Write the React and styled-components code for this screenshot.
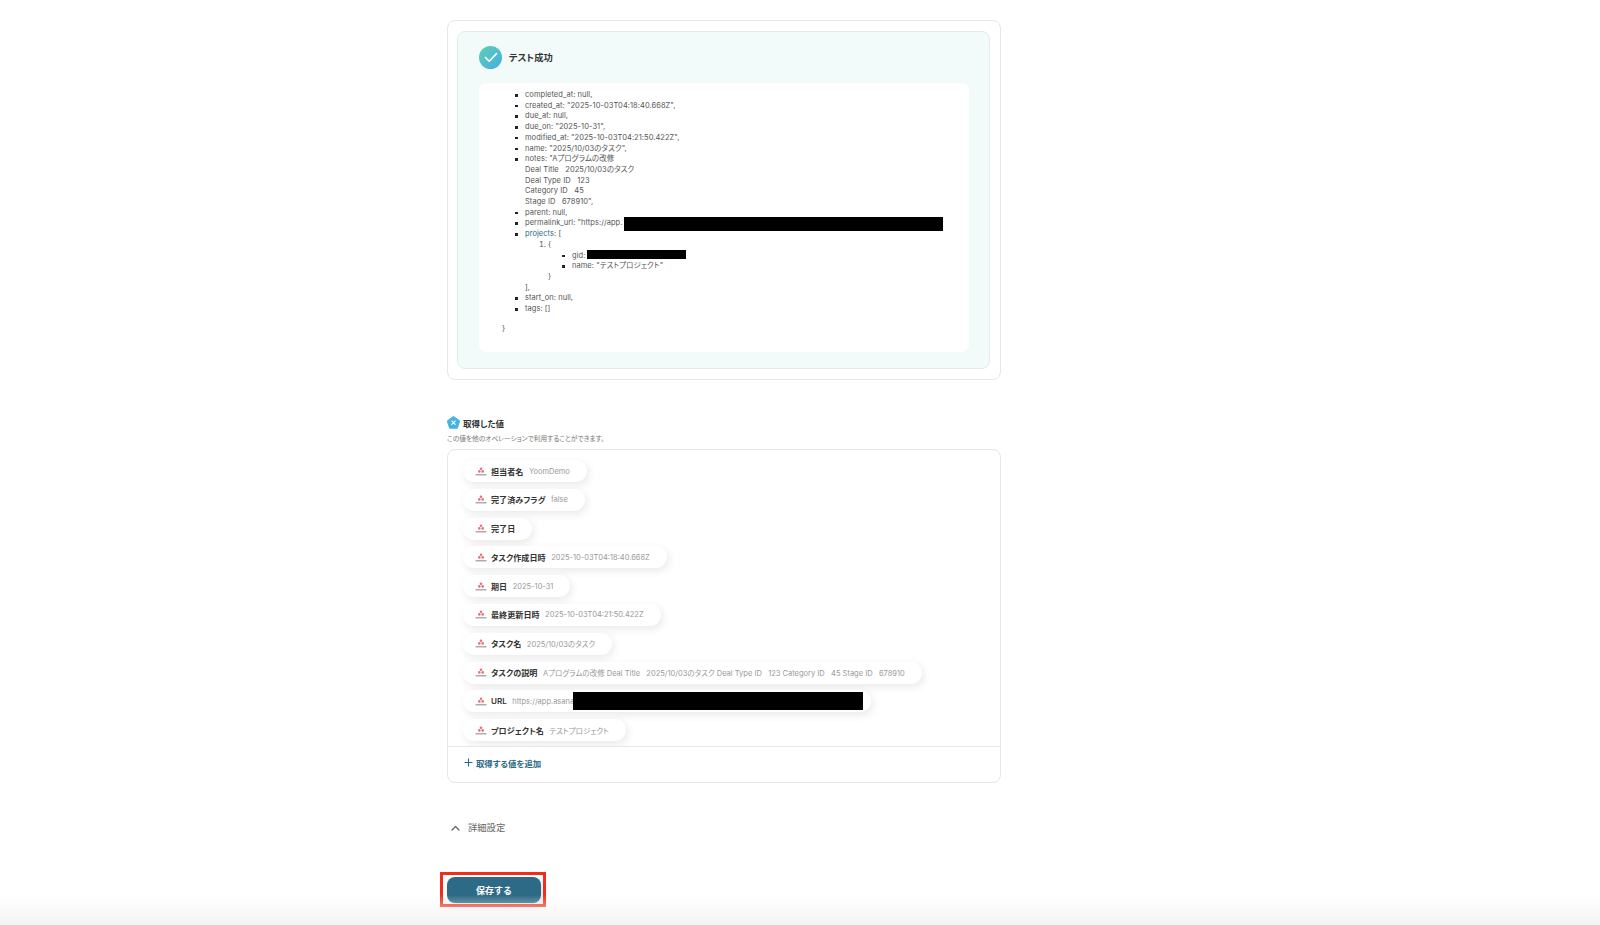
import React from "react";
import styled, { createGlobalStyle, css } from "styled-components";

const FONT = `Inter, "Noto Sans CJK JP", "Noto Sans", sans-serif`;

const outputs = [
  { label: "担当者名", value: "YoomDemo" },
  { label: "完了済みフラグ", value: "false" },
  { label: "完了日", value: "" },
  { label: "タスク作成日時", value: "2025-10-03T04:18:40.668Z" },
  { label: "期日", value: "2025-10-31" },
  { label: "最終更新日時", value: "2025-10-03T04:21:50.422Z" },
  { label: "タスク名", value: "2025/10/03のタスク" },
  {
    label: "タスクの説明",
    value:
      "Aプログラムの改修 Deal Title\u00a0\u00a0\u00a02025/10/03のタスク Deal Type ID\u00a0\u00a0\u00a0123 Category ID\u00a0\u00a0\u00a045 Stage ID\u00a0\u00a0\u00a0678910",
  },
  { label: "URL", value: "https://app.asana", hidden: 290 },
  { label: "プロジェクト名", value: "テストプロジェクト" },
];

function AppMark() {
  return (
    <svg width="12" height="9" viewBox="0 0 12 9">
      <circle cx="6" cy="1.7" r="1.3" fill="#e8727a" />
      <circle cx="4.3" cy="4.4" r="1.3" fill="#e8727a" />
      <circle cx="7.7" cy="4.4" r="1.3" fill="#e8727a" />
      <rect x="0.5" y="7.2" width="11" height="1.2" fill="#999" />
    </svg>
  );
}

function App() {
  return (
    <Page>
      <GlobalStyle />
      <Column>
        <ResultCard>
          <ResultInner>
            <ResultHead>
              <CheckBadge>
                <svg width="14" height="11" viewBox="0 0 14 11" fill="none">
                  <path d="M1.5 5.5L5.2 9.2L12.5 1.6" stroke="#fff" strokeWidth="1.6" strokeLinecap="round" strokeLinejoin="round" />
                </svg>
              </CheckBadge>
              <ResultTitle>テスト成功</ResultTitle>
            </ResultHead>
            <ResultBody>
              <Bullets>
                <li>completed_at: null,</li>
                <li>created_at: "2025-10-03T04:18:40.668Z",</li>
                <li>due_at: null,</li>
                <li>due_on: "2025-10-31",</li>
                <li>modified_at: "2025-10-03T04:21:50.422Z",</li>
                <li>name: "2025/10/03のタスク",</li>
                <li>
                  notes: "Aプログラムの改修
                  <br />
                  Deal Title&nbsp;&nbsp;&nbsp;2025/10/03のタスク
                  <br />
                  Deal Type ID&nbsp;&nbsp;&nbsp;123
                  <br />
                  Category ID&nbsp;&nbsp;&nbsp;45
                  <br />
                  Stage ID&nbsp;&nbsp;&nbsp;678910",
                </li>
                <li>parent: null,</li>
                <li>
                  permalink_url: "https://app.<Redacted $w={319} $h={14} $dy={1} $ml={2} />
                </li>
                <li>
                  <ProjectsKey>projects</ProjectsKey>: [
                  <Numbered>
                    <li>
                      {"{"}
                      <NestedBullets>
                        <li>
                          gid: <Redacted $w={99} $h={9} $dy={-1} $ml={-1} />
                        </li>
                        <li>name: "テストプロジェクト"</li>
                      </NestedBullets>
                      <CloseBrace>{"}"}</CloseBrace>
                    </li>
                  </Numbered>
                  ],
                </li>
                <li>start_on: null,</li>
                <li>tags: []</li>
              </Bullets>
              <RootClose>{"}"}</RootClose>
            </ResultBody>
          </ResultInner>
        </ResultCard>

        <OutputHead>
          <svg width="13" height="13" viewBox="0 0 13 13">
            <path d="M6.5 0.4L12.7 4.9L10.4 12.2H2.6L0.3 4.9Z" fill="#45b3de" stroke="#45b3de" strokeLinejoin="round" />
            <path d="M4.8 5L8.2 8.4M8.2 5L4.8 8.4" stroke="#fff" strokeWidth="1.1" strokeLinecap="round" />
          </svg>
          <OutputTitle>取得した値</OutputTitle>
        </OutputHead>
        <OutputNote>この値を他のオペレーションで利用することができます。</OutputNote>

        <OutputCard>
          <ChipList>
            {outputs.map((o) => (
              <Chip key={o.label}>
                <AppMark />
                <ChipLabel>{o.label}</ChipLabel>
                {o.value && <ChipValue>{o.value}</ChipValue>}
                {o.hidden && <ChipRedacted $w={o.hidden} />}
              </Chip>
            ))}
          </ChipList>
          <AddRow>
            <svg width="9" height="9" viewBox="0 0 9 9">
              <path d="M4.5 0.5V8.5M0.5 4.5H8.5" stroke="#2d6a85" strokeWidth="1.1" />
            </svg>
            <AddLabel>取得する値を追加</AddLabel>
          </AddRow>
        </OutputCard>

        <Advanced>
          <svg width="9" height="6" viewBox="0 0 9 6" fill="none">
            <path d="M1 5L4.5 1.5L8 5" stroke="#666" strokeWidth="1.3" strokeLinecap="round" strokeLinejoin="round" />
          </svg>
          <AdvancedLabel>詳細設定</AdvancedLabel>
        </Advanced>

        <SaveWrap>
          <SaveButton>保存する</SaveButton>
          <Highlight />
        </SaveWrap>
      </Column>
      <BottomFade />
    </Page>
  );
}

export default App;

const GlobalStyle = createGlobalStyle`
  html, body {
    margin: 0;
    padding: 0;
    background: #fff;
    overflow: hidden;
  }
  body {
    font-family: ${FONT};
    font-feature-settings: "palt";
    color: #333;
  }
`;

const squareBullet = css`
  margin: 0;
  list-style: none;
  & > li {
    position: relative;
  }
  & > li::before {
    content: "";
    position: absolute;
    left: -10px;
    top: 4px;
    width: 2.5px;
    height: 2.5px;
    background: #222;
  }
`;

const Page = styled.div`
  position: relative;
  width: 1600px;
  height: 925px;
  padding: 20px 0 0 447px;
  box-sizing: border-box;
  overflow: hidden;
`;

const Column = styled.div`
  width: 554px;
  display: flex;
  flex-direction: column;
`;

const ResultCard = styled.div`
  height: 360px;
  box-sizing: border-box;
  padding: 10px 10px 10px 9px;
  border: 1px solid #e4e6e7;
  border-radius: 8px;
`;

const ResultInner = styled.div`
  height: 100%;
  box-sizing: border-box;
  padding: 0 20px 16px 21px;
  background: #f3fafa;
  border: 1px solid #e4e9ea;
  border-radius: 8px;
  display: flex;
  flex-direction: column;
`;

const ResultHead = styled.div`
  height: 51px;
  flex: none;
  display: flex;
  align-items: center;
  gap: 7px;
`;

const CheckBadge = styled.div`
  width: 23px;
  height: 23px;
  border-radius: 50%;
  background: linear-gradient(135deg, #5fcdb3, #45afe2);
  display: flex;
  align-items: center;
  justify-content: center;
`;

const ResultTitle = styled.div`
  padding-bottom: 2px;
  font-size: 9.3px;
  font-weight: 600;
  color: #333;
`;

const ResultBody = styled.div`
  flex: 1;
  box-sizing: border-box;
  padding: 7px 23px 0;
  background: #fff;
  border-radius: 8px;
  font-size: 7.5px;
  line-height: 10.7px;
  letter-spacing: 0.05px;
  color: #555;
`;

const Bullets = styled.ul`
  ${squareBullet}
  padding-left: 23px;
`;

const ProjectsKey = styled.span`
  color: #2d6a85;
`;

const Numbered = styled.ol`
  margin: 0;
  padding-left: 23px;
`;

const NestedBullets = styled.ul`
  ${squareBullet}
  padding-left: 24px;
`;

const CloseBrace = styled.div`
  padding-left: 0;
`;

const RootClose = styled.div`
  margin-top: 9px;
`;

const Redacted = styled.span`
  display: inline-block;
  width: ${(p) => p.$w}px;
  height: ${(p) => p.$h}px;
  margin: -4px 0 -4px ${(p) => p.$ml}px;
  background: #000;
  vertical-align: middle;
  transform: translateY(${(p) => p.$dy}px);
`;

const OutputHead = styled.div`
  margin-top: 36px;
  display: flex;
  align-items: center;
  gap: 3px;
`;

const OutputTitle = styled.div`
  font-size: 8.5px;
  font-weight: 600;
  color: #333;
`;

const OutputNote = styled.div`
  margin-top: 4px;
  font-size: 6.7px;
  line-height: 12px;
  color: #777;
`;

const OutputCard = styled.div`
  margin-top: 4px;
  height: 334px;
  box-sizing: border-box;
  border: 1px solid #e4e6e7;
  border-radius: 8px;
  display: flex;
  flex-direction: column;
`;

const ChipList = styled.div`
  flex: 1;
  min-height: 0;
  overflow: hidden;
  padding: 10px 15px 0;
  display: flex;
  flex-direction: column;
  align-items: flex-start;
  gap: 6.8px;
  border-bottom: 1px solid #e8e8e8;
`;

const Chip = styled.div`
  height: 22px;
  flex: none;
  box-sizing: border-box;
  padding: 0 17px 0 12px;
  display: flex;
  align-items: center;
  background: #fff;
  border-radius: 11px;
  box-shadow: 2px 3px 8px rgba(0, 0, 0, 0.09);
  white-space: nowrap;
`;

const ChipLabel = styled.span`
  margin-left: 4px;
  font-size: 8.1px;
  font-weight: 600;
  color: #333;
`;

const ChipValue = styled.span`
  margin-left: 5.5px;
  font-size: 7.5px;
  color: #999;
`;

const ChipRedacted = styled.span`
  width: ${(p) => p.$w}px;
  height: 18px;
  margin-left: -1px;
  margin-right: -9px;
  background: #000;
`;

const AddRow = styled.div`
  height: 35px;
  flex: none;
  box-sizing: border-box;
  padding: 0 0 4px 16px;
  display: flex;
  align-items: center;
  gap: 3px;
`;

const AddLabel = styled.span`
  font-size: 8.4px;
  font-weight: 600;
  color: #2d6a85;
`;

const Advanced = styled.div`
  margin-top: 38px;
  padding-left: 4px;
  display: flex;
  align-items: center;
  gap: 8px;
`;

const AdvancedLabel = styled.span`
  font-size: 9.3px;
  line-height: 14px;
  color: #666;
`;

const SaveWrap = styled.div`
  position: relative;
  margin-top: 42px;
  width: 94px;
`;

const SaveButton = styled.button`
  display: block;
  width: 94px;
  height: 26px;
  padding: 0;
  border: none;
  border-radius: 8px;
  background: #2d6a85;
  box-shadow: 2px 3px 8px rgba(0, 0, 0, 0.15);
  color: #fff;
  font-family: ${FONT};
  font-size: 9px;
  font-weight: 600;
`;

const Highlight = styled.div`
  position: absolute;
  left: -7px;
  top: -5px;
  width: 106px;
  height: 35px;
  box-sizing: border-box;
  border: 3px solid #ee2e1a;
`;

const BottomFade = styled.div`
  position: absolute;
  left: 0;
  right: 0;
  bottom: 0;
  height: 30px;
  background: linear-gradient(to bottom, rgba(245, 245, 245, 0), #f4f4f4);
  pointer-events: none;
`;
